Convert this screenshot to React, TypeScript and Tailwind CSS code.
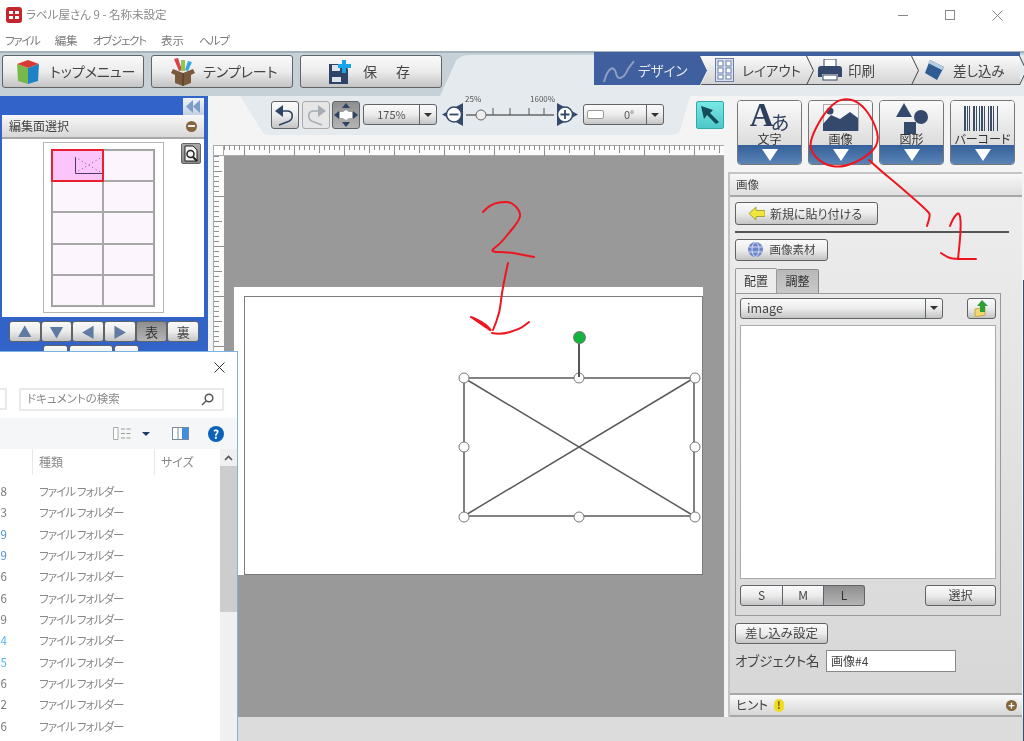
import type { ReactNode } from "react";

// ラベル屋さん 9 - design view with an explorer window lying over it

const FONT = "font-['Noto_Sans_CJK_JP','Noto_Sans',sans-serif] [font-feature-settings:'palt']";
const BTN =
  "flex items-center justify-center rounded-[3px] border border-[#5f6468] bg-gradient-to-b from-[#fafafa] via-[#ececec] to-[#c4c4c4] text-[#444]";
const BTN_ON =
  "flex items-center justify-center rounded-[3px] border border-[#5f6468] bg-gradient-to-b from-[#8f8f8f] to-[#b4b4b4] text-[#333]";
const TAB = "relative flex items-center border-b border-[#555] bg-gradient-to-b from-[#fafafa] to-[#d4d4d4]";

function TopButton({ icon, label, className }: { icon: ReactNode; label: string; className: string }) {
  return (
    <button type="button" className={`${BTN} h-[33px] w-[142px] !justify-start text-[14px] ${className}`}>
      {icon}
      <span className="whitespace-pre">{label}</span>
    </button>
  );
}

function Chevron({ blue }: { blue?: boolean }) {
  return (
    <svg width="9" height="29" viewBox="0 0 9 29" className="absolute left-full top-0 z-10 -ml-[1px]">
      <path
        d="M0.5 0 L7.5 14.5 L0.5 29"
        fill={blue ? "#3f5f9f" : "none"}
        stroke={blue ? "#f2f2f2" : "#444"}
      />
    </svg>
  );
}

function Cube() {
  return (
    <svg width="24" height="26" viewBox="0 0 24 26">
      <path d="M1 5 L12 1 L23 5 L12 9 Z" fill="#d93a34" />
      <path d="M1 5 L12 9 L12 25 L2 22 Z" fill="#78b84a" />
      <path d="M12 9 L23 5 L22 22 L12 25 Z" fill="#1d83c6" />
    </svg>
  );
}

function TemplateBox() {
  return (
    <svg width="26" height="28" viewBox="0 0 26 28">
      <path d="M4 1 L8 0 L12 12 L9 13 Z" fill="#d8434a" />
      <rect x="11" y="2" width="4" height="11" fill="#8fc64f" />
      <path d="M18 3 L22 4 L18 13 L15 12 Z" fill="#37a9df" />
      <path d="M3 11 L13 15 L23 11 L25 15 L21 17 L21 25 L13 28 L5 25 L5 17 L1 15 Z" fill="#7a5a3c" />
      <path d="M13 15 L13 28" stroke="#4c3725" strokeWidth="1" />
    </svg>
  );
}

function SaveIcon() {
  return (
    <svg width="22" height="24" viewBox="0 0 22 24">
      <path d="M0 4 H14 L19 9 V24 H0 Z" fill="#2d4468" />
      <rect x="3" y="5" width="8" height="6" fill="#dbe2ea" />
      <rect x="3" y="17" width="9" height="5" fill="#dbe2ea" />
      <path d="M13 0 H17 V4 H22 V8 H17 V13 H13 V8 H9 V4 H13 Z" fill="#19a3e8" />
    </svg>
  );
}

function Undo({ flip, color }: { flip?: boolean; color: string }) {
  return (
    <svg width="22" height="22" viewBox="0 0 22 22" className={flip ? "-scale-x-100" : ""}>
      <path d="M1 7 L9 1 L9 13 Z" fill={color} />
      <path d="M8 7 H13 C20 7 20 16 13 18 L5 21" fill="none" stroke={color} strokeWidth="1.6" />
    </svg>
  );
}

function FitIcon() {
  return (
    <svg width="24" height="24" viewBox="0 0 24 24" fill="#2f4464">
      <path d="M12 0 L16 5 H8 Z M12 24 L8 19 H16 Z M0 12 L5 8 V16 Z M24 12 L19 16 V8 Z" />
      <path d="M6 9 H9 L12 7 L15 9 H18 V15 H15 L12 17 L9 15 H6 Z" fill="#fff" />
    </svg>
  );
}

function Slider() {
  return (
    <div className="relative ml-[5px] h-[28px] w-[136px]">
      <svg width="136" height="28" viewBox="0 0 136 28" className="absolute left-0 top-0">
        <path d="M0 13.5 L21 2 L21 25 Z" fill="#34496b" />
        <circle cx="12" cy="13.5" r="7.5" fill="#fff" stroke="#34496b" strokeWidth="1.5" />
        <path d="M7.5 13.5 H16.5" stroke="#34496b" strokeWidth="1.8" />
        <path d="M24 14 H112" stroke="#666" strokeWidth="1.5" />
        <path d="M51 14 V7 M68 14 V7 M87 14 V7 M102 14 V7" stroke="#555" />
        <circle cx="39" cy="14" r="5" fill="#eee" stroke="#666" />
        <path d="M136 13.5 L115 2 L115 25 Z" fill="#34496b" />
        <circle cx="123" cy="13.5" r="7.5" fill="#fff" stroke="#34496b" strokeWidth="1.5" />
        <path d="M118.5 13.5 H127.5 M123 9 V18" stroke="#34496b" strokeWidth="1.8" />
      </svg>
      <span className="absolute left-[23px] top-[-8px] text-[8px] text-[#555]">25%</span>
      <span className="absolute left-[88px] top-[-8px] text-[8px] text-[#555]">1600%</span>
    </div>
  );
}

function Dropdown({ className, children }: { className: string; children: ReactNode }) {
  return (
    <div className={`${BTN} ${className} !justify-between`}>
      <div className="flex h-full min-w-0 flex-1 items-center">{children}</div>
      <div className="flex h-full w-[17px] items-center justify-center border-l border-[#5f6468]">
        <span className="h-0 w-0 border-x-[4px] border-t-[4px] border-x-transparent border-t-[#333]" />
      </div>
    </div>
  );
}

function ToolButton({ icon, label }: { icon: ReactNode; label: string }) {
  return (
    <div className="flex h-[65px] w-[65px] flex-col overflow-hidden rounded-[4px] border border-[#777]">
      <div className="flex flex-1 flex-col items-center bg-gradient-to-b from-[#fafafa] to-[#dcdcdc]">
        <div className="flex h-[30px] items-end">{icon}</div>
        <span className="mt-[1px] whitespace-nowrap text-[12px] leading-[13px] text-[#333]">{label}</span>
      </div>
      <div className="flex h-[19px] items-center justify-center bg-gradient-to-b from-[#35609a] to-[#5a84b6]">
        <span className="h-0 w-0 border-x-[8px] border-t-[12px] border-x-transparent border-t-white" />
      </div>
    </div>
  );
}

function PictureIcon() {
  return (
    <svg width="36" height="27" viewBox="0 0 36 27">
      <rect x="0.5" y="0.5" width="35" height="26" fill="#f6f6f6" stroke="#aaa" />
      <circle cx="7" cy="7" r="3.5" fill="#34496b" />
      <path d="M0 27 V20 L8 11 L17 15 L27 8 L35 14 V27 Z" fill="#34496b" />
    </svg>
  );
}

function ShapesIcon() {
  return (
    <svg width="34" height="31" viewBox="0 0 34 31" fill="#34496b" className="mb-[-3px]">
      <path d="M9 0 L17 14 H1 Z" />
      <circle cx="26" cy="14" r="7" />
      <rect x="9" y="19" width="12" height="12" />
    </svg>
  );
}

function Barcode() {
  const bars = [0, 3, 5, 9, 12, 15, 17, 20, 24, 26, 29, 33];
  return (
    <svg width="37" height="25" viewBox="0 0 37 25" fill="#3b4c68">
      {bars.map((x, i) => (
        <rect key={x} x={x} y="0" width={i % 3 === 0 ? 2 : 1} height="25" />
      ))}
    </svg>
  );
}

// ticks hang from the top / left edge; full height every 50 units
function Ruler({ vertical, length, offset }: { vertical?: boolean; length: number; offset: number }) {
  const ticks = [];
  for (let i = 0; i < length; i += 5) {
    const n = (i - offset + 500) % 50;
    const size = n === 0 ? 11 : n === 25 ? 8 : 5;
    ticks.push(
      vertical ? (
        <path key={i} d={`M0 ${i + 0.5} H${size}`} stroke="#8f8f8f" />
      ) : (
        <path key={i} d={`M${i + 0.5} 0 V${size}`} stroke="#8f8f8f" />
      ),
    );
  }
  return (
    <svg width={vertical ? 11 : length} height={vertical ? length : 11} className="block shrink-0">
      {ticks}
    </svg>
  );
}

function LeftPanel() {
  const cells = Array.from({ length: 10 }, (_, i) => i);
  return (
    <div className="flex h-full w-[208px] shrink-0 flex-col bg-[#3263c8] px-[2px] pt-[2px]">
      <div className="flex justify-end pr-[2px]">
        <div className="flex h-[17px] w-[21px] items-center justify-center bg-gradient-to-b from-[#f0f3f8] to-[#c4d0e0] text-[#7d9cc8]">
          <svg width="15" height="13" viewBox="0 0 15 13" fill="currentColor">
            <path d="M7 0 V13 L0 6.5 Z M14 0 V13 L7 6.5 Z" />
          </svg>
        </div>
      </div>
      <div className="flex h-[24px] w-[202px] items-center justify-between border-b-2 border-[#a8a8a8] bg-gradient-to-b from-[#f8f8f8] to-[#d8d8d8] pl-[7px] pr-[7px]">
        <span className="text-[12px] text-[#444]">編集面選択</span>
        <span className="flex h-[11px] w-[11px] items-center justify-center rounded-full bg-[#85653d]">
          <span className="h-[2px] w-[7px] bg-[#eee]" />
        </span>
      </div>
      <div className="relative h-[178px] w-[202px] bg-white pl-[41px] pt-[3px]">
        <div className="h-[171px] w-[121px] border border-[#b5b5b5] bg-white p-[6px] pl-[7px]">
          <div className="grid h-[158px] w-[104px] grid-cols-2 grid-rows-5 border border-[#a0a0a0] bg-[#fdf5fe]">
            {cells.map((i) => (
              <div
                key={i}
                className={
                  i === 0
                    ? "relative -m-[1px] border-2 border-[#e8202f] bg-[#fbc4fb]"
                    : "border border-[#a8a8a8]"
                }
              >
                {i === 0 && (
                  <svg width="27" height="17" viewBox="0 0 27 17" className="absolute left-[22px] top-[6px]">
                    <path d="M0.5 0 V16.5 H27" fill="none" stroke="#4a3a66" />
                    <path d="M0 0 L27 16 M0 16 L27 0" stroke="#6d5a80" strokeDasharray="1 3" />
                  </svg>
                )}
              </div>
            ))}
          </div>
        </div>
        <div className="absolute left-[179px] top-[4px] flex h-[21px] w-[20px] items-center justify-center rounded-[2px] border border-[#666] bg-gradient-to-b from-[#aaa] to-[#888]">
          <svg width="16" height="17" viewBox="0 0 16 17">
            <path d="M2 1 H10 L14 5 V16 H2 Z" fill="#f4f4f4" stroke="#222" />
            <circle cx="7.5" cy="9" r="3.5" fill="none" stroke="#222" strokeWidth="1.5" />
            <path d="M10 12 L14 16" stroke="#222" strokeWidth="2" />
          </svg>
        </div>
      </div>
      <div className="ml-[7px] mt-[4px] flex h-[21px] w-[190px]">
        {["▲", "▼", "◀", "▶"].map((g) => (
          <div key={g} className={`${BTN} h-full w-[32px] text-[14px] !text-[#5f7ba0]`}>
            {g}
          </div>
        ))}
        <div className={`${BTN_ON} h-full w-[32px] text-[13px]`}>表</div>
        <div className={`${BTN} h-full w-[32px] text-[13px]`}>裏</div>
      </div>
      <div className="ml-[41px] mt-[3px] flex h-[8px] w-[96px] gap-[1px]">
        <div className={`${BTN} h-[20px] w-[25px]`} />
        <div className={`${BTN} h-[20px] w-[44px]`} />
        <div className={`${BTN} h-[20px] w-[25px]`} />
      </div>
    </div>
  );
}

function Canvas() {
  const handles: [number, number][] = [
    [0, 0],
    [115, 0],
    [231, 0],
    [0, 69],
    [231, 69],
    [0, 139],
    [115, 139],
    [231, 139],
  ];
  return (
    <div className="flex min-h-0 flex-1 flex-col">
      <div className="flex h-[11px] shrink-0 bg-[#fbfbfb] shadow-[inset_0_1px_0_#aaa,inset_0_-1px_0_#aaa]">
        <div className="h-[11px] w-[11px] shrink-0 border border-[#aaa] bg-white" />
        <Ruler length={500} offset={20} />
      </div>
      <div className="flex min-h-0 flex-1">
        <div className="w-[11px] shrink-0 overflow-hidden border-l border-[#aaa] bg-[#fbfbfb]">
          <Ruler vertical length={570} offset={40} />
        </div>
        <div className="min-w-0 flex-1 bg-[#999999] pl-[10px] pt-[131px]">
          <div className="h-[288px] w-[469px] bg-white pl-[10px] pt-[9px]">
            <div className="relative h-[279px] w-[459px] border border-[#7d7d7d] border-b-[#777] bg-white">
              <div className="absolute left-[218px] top-[80px] h-[140px] w-[232px]">
                <svg width="232" height="140" viewBox="0 0 232 140" className="absolute left-0 top-0">
                  <rect x="1" y="1" width="230" height="138" fill="none" stroke="#5a5a5a" strokeWidth="1.5" />
                  <path d="M1 1 L231 139 M1 139 L231 1" stroke="#5a5a5a" strokeWidth="1.5" />
                </svg>
                {handles.map(([x, y]) => (
                  <span
                    key={`${x}-${y}`}
                    className="absolute h-[11px] w-[11px] -translate-x-[4.5px] -translate-y-[4.5px] rounded-full border border-[#777] bg-white"
                    style={{ left: x, top: y }}
                  />
                ))}
                <span className="absolute left-[115px] top-[-34px] h-[34px] w-[1.5px] bg-[#555]" />
                <span className="absolute left-[111px] top-[-45px] h-[11px] w-[11px] rounded-full bg-[#12b53c] ring-1 ring-[#777]" />
              </div>
            </div>
          </div>
        </div>
      </div>
    </div>
  );
}

function RightPanel() {
  return (
    <div className="flex min-h-0 flex-1 flex-col border-l-2 border-[#c4c4c4] border-t-2 border-t-[#c4c4c4] bg-gradient-to-b from-[#eeeeee] to-[#d6d6d6]">
      <div className="flex h-[23px] shrink-0 items-center border-b-2 border-[#a8a8a8] bg-gradient-to-b from-[#f8f8f8] to-[#dedede] pl-[6px] text-[11.5px] text-[#444]">
        画像
      </div>
      <div className="relative flex-1 pl-[5px] pt-[5px]">
        <div className={`${BTN} h-[23px] w-[143px] gap-[5px] pr-[2px] text-[12px]`}>
          <svg width="16" height="13" viewBox="0 0 16 13">
            <path d="M7 0 V3.5 H16 V9.5 H7 V13 L0 6.5 Z" fill="#efe63c" stroke="#a8a23c" />
          </svg>
          新規に貼り付ける
        </div>
        <div className="mt-[6px] h-[1.5px] w-[274px] bg-[#555]" />
        <div className={`${BTN} mt-[6px] h-[22px] w-[93px] gap-[7px] text-[11.5px]`}>
          <svg width="15" height="15" viewBox="0 0 15 15" fill="none" stroke="#eef" strokeWidth="0.8">
            <circle cx="7.5" cy="7.5" r="7.5" fill="#6d86c8" stroke="none" />
            <ellipse cx="7.5" cy="7.5" rx="3.5" ry="7" />
            <path d="M0.5 5 H14.5 M0.5 10 H14.5" />
          </svg>
          画像素材
        </div>
        <div className="mt-[7px] flex h-[26px] items-end">
          <div className="flex h-[26px] w-[42px] items-center justify-center rounded-t-[2px] border border-b-0 border-[#9a9a9a] bg-[#ececec] text-[12px] text-[#333]">
            配置
          </div>
          <div className="flex h-[25px] w-[42px] items-center justify-center rounded-t-[2px] border border-l-0 border-[#8a8a8a] bg-gradient-to-b from-[#b8b8b8] to-[#c8c8c8] text-[12px] text-[#333]">
            調整
          </div>
        </div>
        <div className="relative -mt-[1px] h-[323px] w-[266px] border border-[#9a9a9a] pl-[4px] pt-[4px]">
          <div className="flex items-center justify-between pr-[4px]">
            <Dropdown className="h-[21px] w-[203px]">
              <span className="pl-[6px] text-[12.5px] text-[#444]">image</span>
            </Dropdown>
            <div className={`${BTN} h-[21px] w-[29px]`}>
              <svg width="16" height="17" viewBox="0 0 16 17">
                <path d="M1 9 L11 7 V15 L1 17 Z" fill="#f3d772" stroke="#c5a94e" />
                <path d="M8 0 L14 6 H11 V12 H6 V6 H3 Z" fill="#2f9e37" />
              </svg>
            </div>
          </div>
          <div className="mt-[6px] h-[254px] w-[256px] border border-[#aaa] bg-white" />
          <div className="mt-[6px] flex h-[21px] w-[256px] items-center justify-between text-[12px]">
            <div className="flex">
              <div className={`${BTN} h-[21px] w-[43px] !rounded-r-none`}>S</div>
              <div className={`${BTN} h-[21px] w-[41px] !rounded-none !border-l-0`}>M</div>
              <div className={`${BTN_ON} h-[21px] w-[41px] !rounded-l-none !border-l-0`}>L</div>
            </div>
            <div className={`${BTN} h-[21px] w-[71px]`}>選択</div>
          </div>
        </div>
        <div className={`${BTN} mt-[7px] h-[21px] w-[93px] text-[12.5px]`}>差し込み設定</div>
        <div className="mt-[6px] flex items-center">
          <span className="w-[91px] whitespace-nowrap text-[13.5px] text-[#444]">オブジェクト名</span>
          <div className="flex h-[22px] w-[130px] items-center border border-[#888] bg-white pl-[4px] text-[12px] text-[#444]">
            画像#4
          </div>
        </div>
      </div>
      <div className="flex h-[24px] shrink-0 items-center justify-between border-y-2 border-[#a8a8a8] bg-gradient-to-b from-[#fafafa] to-[#d6d6d6] pl-[6px] pr-[5px]">
        <span className="flex items-center gap-[6px] text-[12.5px] text-[#444]">
          ヒント
          <span className="flex h-[13px] w-[10px] items-center justify-center rounded-full bg-[#f0dc1e] text-[10px] font-bold leading-none text-[#6b5a00]">
            !
          </span>
        </span>
        <span className="flex h-[11px] w-[11px] items-center justify-center rounded-full bg-[#85653d] text-[11px] font-bold leading-none text-white">
          +
        </span>
      </div>
    </div>
  );
}

function ExplorerWindow() {
  const rows: [string, string][] = [
    ["28", "#777"],
    ["03", "#777"],
    ["9", "#4a8fd6"],
    ["9", "#4a8fd6"],
    ["26", "#777"],
    ["26", "#777"],
    ["19", "#777"],
    ["4", "#58b7e8"],
    ["5", "#58b7e8"],
    ["26", "#777"],
    ["52", "#777"],
    ["26", "#777"],
  ];
  return (
    <div className="absolute left-0 top-[351px] flex h-[390px] w-[238px] flex-col border-r border-t border-[#79b4e4] bg-white">
      <div className="flex h-[35px] shrink-0 items-start justify-end pr-[12px] pt-[10px]">
        <svg width="11" height="11" viewBox="0 0 11 11" stroke="#333" strokeWidth="1">
          <path d="M0.5 0.5 L10.5 10.5 M10.5 0.5 L0.5 10.5" />
        </svg>
      </div>
      <div className="flex h-[24px] shrink-0 items-center">
        <div className="h-[22px] w-[7px] border-y-2 border-r-2 border-[#e9e9e9]" />
        <div className="ml-[12px] flex h-[23px] w-[205px] items-center justify-between border-2 border-[#e9e9e9] pl-[6px] pr-[8px] text-[11.5px] text-[#888]">
          ドキュメントの検索
          <svg width="13" height="13" viewBox="0 0 13 13" fill="none" stroke="#555" strokeWidth="1.5">
            <circle cx="8" cy="5" r="3.8" />
            <path d="M5 8 L1 12" />
          </svg>
        </div>
      </div>
      <div className="mt-[7px] flex h-[31px] shrink-0 items-center bg-[#f5f6f7] pl-[113px]">
        <svg width="18" height="13" viewBox="0 0 18 13">
          <path d="M0.5 0.5 H5 V12.5 H0.5 Z" fill="#fff" stroke="#aaa" />
          <path d="M8 2 H18 M8 6.5 H18 M8 11 H18" stroke="#999" strokeDasharray="4 1.5" />
        </svg>
        <span className="ml-[11px] h-0 w-0 border-x-[4px] border-t-[4px] border-x-transparent border-t-[#1f3a68]" />
        <svg width="17" height="13" viewBox="0 0 17 13" className="ml-[22px]">
          <rect x="0.5" y="0.5" width="16" height="12" fill="#fff" stroke="#7a8a9a" />
          <rect x="10" y="1" width="6" height="11" fill="#3f8ee0" />
          <path d="M6 1 V12" stroke="#7a8a9a" />
        </svg>
        <span className="ml-[19px] flex h-[16px] w-[16px] items-center justify-center rounded-full bg-[#0a63b8] text-[12px] font-bold leading-none text-white">
          ?
        </span>
      </div>
      <div className="flex min-h-0 flex-1">
        <div className="flex w-[220px] shrink-0 flex-col overflow-hidden">
          <div className="flex h-[26px] shrink-0 items-center text-[12px] text-[#888]">
            <span className="h-full w-[33px] border-r border-[#e8e8e8]" />
            <span className="h-full w-[122px] border-r border-[#e8e8e8] pl-[6px] leading-[26px]">種類</span>
            <span className="pl-[6px]">サイズ</span>
          </div>
          <div className="mt-[6px] flex flex-col">
            {rows.map(([num, color], i) => (
              <div key={i} className="flex h-[21.35px] items-center text-[11.5px]">
                <span className="flex w-[7px] shrink-0 justify-end overflow-hidden" style={{ color }}>
                  {num}
                </span>
                <span className="ml-[32px] whitespace-pre tracking-[-0.9px] text-[#888]">ファイル フォルダー</span>
              </div>
            ))}
          </div>
        </div>
        <div className="flex w-[17px] shrink-0 flex-col bg-[#f0f0f0]">
          <div className="flex h-[17px] items-center justify-center">
            <svg width="9" height="6" viewBox="0 0 9 6" fill="none" stroke="#555" strokeWidth="1.6">
              <path d="M1 5 L4.5 1.5 L8 5" />
            </svg>
          </div>
          <div className="h-[146px] bg-[#cdcdcd]" />
        </div>
      </div>
    </div>
  );
}

// hand-drawn strokes: midpoints joined by quadratics so the pen line stays round
function smooth(points: number[][], closed?: boolean) {
  const mid = (a: number[], b: number[]) => [(a[0] + b[0]) / 2, (a[1] + b[1]) / 2];
  const n = points.length;
  if (closed) {
    const start = mid(points[n - 1], points[0]);
    let d = `M${start[0]} ${start[1]}`;
    points.forEach((p, i) => {
      const m = mid(p, points[(i + 1) % n]);
      d += ` Q${p[0]} ${p[1]} ${m[0]} ${m[1]}`;
    });
    return d + " Z";
  }
  let d = `M${points[0][0]} ${points[0][1]}`;
  for (let i = 1; i < n - 1; i++) {
    const m = mid(points[i], points[i + 1]);
    d += ` Q${points[i][0]} ${points[i][1]} ${m[0]} ${m[1]}`;
  }
  return d + ` L${points[n - 1][0]} ${points[n - 1][1]}`;
}

function RedMarks() {
  const strokes = [
    smooth(
      [
        [840, 98],
        [859, 101],
        [874, 121],
        [880, 143],
        [865, 158],
        [842, 168],
        [822, 164],
        [809, 149],
        [813, 133],
        [825, 112],
      ],
      true,
    ),
    smooth([[869, 160], [881, 171], [897, 184], [929, 212], [930, 216], [927, 226]]),
    smooth([[950, 226], [953, 218], [960, 211], [961, 230], [958, 259]]),
    smooth([[941, 253], [948, 258], [957, 259], [976, 259]]),
    smooth([[483, 212], [490, 204], [508, 201], [516, 206], [521, 214], [518, 222], [508, 234], [500, 244], [489, 252], [508, 252], [534, 257]]),
    smooth([[508, 263], [502, 290], [500, 312], [493, 330]]),
    smooth([[471, 317], [483, 322], [493, 332], [484, 326], [471, 317]]),
    smooth([[492, 333], [500, 335], [520, 329], [529, 322]]),
  ];
  return (
    <svg
      width="1024"
      height="741"
      viewBox="0 0 1024 741"
      fill="none"
      stroke="#f0141e"
      strokeWidth="2"
      strokeLinejoin="round"
      strokeLinecap="round"
      className="pointer-events-none absolute left-0 top-0"
    >
      {strokes.map((d) => (
        <path key={d} d={d} />
      ))}
    </svg>
  );
}

export default function App() {
  return (
    <div className={`${FONT} relative h-[741px] w-[1024px] overflow-hidden bg-white blur-[0.5px]`}>
      {/* title bar */}
      <div className="flex h-[30px] items-center pl-[6px] pr-[21px]">
        <svg width="16" height="16" viewBox="0 0 16 16">
          <rect width="16" height="16" rx="3" fill="#c1272d" />
          <path d="M3 4 H7 V7 H3 Z M9 4 H13 V7 H9 Z M3 9 H7 V12 H3 Z M9 9 H13 V12 H9 Z" fill="#fff" />
        </svg>
        <span className="ml-[4px] flex-1 text-[11.5px] text-[#8a8a8a]">ラベル屋さん 9 - 名称未設定</span>
        <span className="h-[1px] w-[10px] bg-[#888]" />
        <span className="ml-[37px] h-[10px] w-[10px] border border-[#888]" />
        <svg width="11" height="11" viewBox="0 0 11 11" stroke="#888" className="ml-[37px]">
          <path d="M0.5 0.5 L10.5 10.5 M10.5 0.5 L0.5 10.5" />
        </svg>
      </div>
      {/* menu */}
      <div className="flex h-[21px] items-center gap-[15px] pl-[5px] text-[11.5px] text-[#7a7a7a]">
        <span className="tracking-[-1.3px]">ファイル</span>
        <span>編集</span>
        <span className="tracking-[-1.2px]">オブジェクト</span>
        <span>表示</span>
        <span className="tracking-[-1px]">ヘルプ</span>
      </div>

      {/* workspace */}
      <div className="relative h-[690px] bg-[#f4f4f4]">
        <svg width="1024" height="97" viewBox="0 0 1024 97" className="absolute left-0 top-0">
          <rect width="1024" height="45" fill="#c5d0d7" />
          <rect width="1024" height="2" fill="#a4b2bc" />
          <path d="M470 4 H1024 V45 H690 L680 80 Q678 84 670 84 H268 Q264 84 262 80 L240 45 H440 L455 12 Q458 4 470 4 Z" fill="#e5eaee" />
        </svg>

        {/* top toolbar */}
        <div className="relative flex h-[45px] items-start justify-between pr-[4px] pt-[4px]">
          <div className="flex gap-[7px] pl-[2px]">
            <TopButton icon={<Cube />} label="トップメニュー" className="gap-[10px] pl-[13px]" />
            <TopButton icon={<TemplateBox />} label="テンプレート" className="gap-[7px] pl-[18px]" />
            <TopButton
              icon={<SaveIcon />}
              label="保　　存"
              className="gap-[12px] pl-[28px] tracking-[-3px]"
            />
          </div>
          <div className="-mt-[3px] flex h-[33px] w-[426px] items-stretch border-t-[4px] border-[#3f5f9f] text-[13.5px] text-[#444]">
            <div className="relative flex w-[107px] items-center gap-[2px] bg-[#3f5f9f] pl-[8px] text-[#e6e9f2]">
              <svg width="34" height="24" viewBox="0 0 34 24" fill="none" stroke="#8f9fc4" strokeWidth="2">
                <path d="M2 23 C6 8 12 6 14 14 C15 22 22 20 26 10 L32 2" />
              </svg>
              デザイン
              <Chevron blue />
            </div>
            <div className={`${TAB} w-[106px] gap-[8px] pl-[14px]`}>
              <svg width="19" height="24" viewBox="0 0 19 24" fill="#fff" stroke="#6a7ea8">
                <rect x="0.5" y="0.5" width="18" height="23" fill="#dbe2ef" />
                <rect x="3" y="3" width="5" height="5" />
                <rect x="11" y="3" width="5" height="5" />
                <rect x="3" y="10" width="5" height="5" />
                <rect x="11" y="10" width="5" height="5" />
                <rect x="3" y="17" width="5" height="4" />
                <rect x="11" y="17" width="5" height="4" />
              </svg>
              <span className="whitespace-nowrap">レイアウト</span>
              <Chevron />
            </div>
            <div className={`${TAB} w-[105px] gap-[6px] pl-[11px]`}>
              <svg width="24" height="22" viewBox="0 0 24 22" fill="#34496b">
                <rect x="6" y="0" width="12" height="8" fill="#fff" stroke="#34496b" />
                <path d="M0 10 Q0 7 3 7 H21 Q24 7 24 10 V18 H20 V15 H4 V18 H0 Z" />
                <rect x="5" y="16" width="14" height="5" fill="#fff" stroke="#34496b" />
              </svg>
              <span>印刷</span>
              <Chevron />
            </div>
            <div className={`${TAB} flex-1 gap-[9px] pl-[13px]`}>
              <svg width="19" height="20" viewBox="0 0 19 20">
                <path d="M5 0 L19 7 L12 20 L0 13 Z" fill="#2f5c92" />
                <path d="M5 0 L19 7 L17 10 L3 3 Z" fill="#b8cde2" />
              </svg>
              <span className="whitespace-nowrap">差し込み</span>
              <Chevron />
            </div>
          </div>
        </div>

        {/* main row */}
        <div className="relative flex h-[621px]">
          <LeftPanel />

          <div className="flex w-[516px] shrink-0 flex-col pl-[5px]">
            <div className="flex h-[49px] shrink-0 items-start pl-[58px] pt-[5px]">
              <div className={`${BTN} h-[28px] w-[28px]`}>
                <Undo color="#2f4464" />
              </div>
              <div className="ml-[3px] flex h-[28px] w-[28px] items-center justify-center rounded-[3px] border border-[#aaa] bg-[#e6e6e6]">
                <Undo flip color="#a6adb5" />
              </div>
              <div className={`${BTN_ON} ml-[2px] h-[28px] w-[28px]`}>
                <FitIcon />
              </div>
              <Dropdown className="ml-[3px] mt-[3px] h-[21px] w-[74px]">
                <span className="w-full text-center text-[11px] text-[#555]">175%</span>
              </Dropdown>
              <Slider />
              <Dropdown className="ml-[5px] mt-[3px] h-[21px] w-[81px]">
                <span className="relative ml-[3px] h-[9px] w-[17px] rounded-[2px] border border-[#999] bg-white" />
                <span className="ml-[20px] text-[11px] text-[#555]">0°</span>
              </Dropdown>
              <div className="ml-[32px] flex h-[28px] w-[28px] items-center justify-center rounded-[2px] border border-[#3aa] bg-gradient-to-b from-[#78e8e4] to-[#4cc8c8]">
                <svg width="20" height="20" viewBox="0 0 20 20" fill="#154a58">
                  <path d="M1 1 L13 5 L10 8 L19 17 L16 19 L7 10 L4 14 Z" />
                </svg>
              </div>
            </div>
            <Canvas />
          </div>

          <div className="flex min-w-0 flex-1 flex-col pl-[4px] pr-[2px]">
            <div className="flex h-[76px] shrink-0 gap-[6px] pl-[9px] pt-[4px]">
              <ToolButton
                label="文字"
                icon={
                  <span className="flex h-[30px] items-start pt-[2px] leading-none text-[#2d3f5c]">
                    <span className="font-['Liberation_Serif',serif] text-[33px] font-bold leading-[24px]">A</span>
                    <span className="-ml-[3px] mt-[10px] text-[19px] leading-[18px]">あ</span>
                  </span>
                }
              />
              <ToolButton label="画像" icon={<PictureIcon />} />
              <ToolButton label="図形" icon={<ShapesIcon />} />
              <ToolButton label="バーコード" icon={<Barcode />} />
            </div>
            <RightPanel />
          </div>
        </div>

        <div className="h-[24px] bg-[#dcdcdc]" />
      </div>

      <ExplorerWindow />
      <RedMarks />
      <div className="absolute bottom-0 right-0 top-[280px] w-[1.5px] bg-[#30506f]" />
    </div>
  );
}
